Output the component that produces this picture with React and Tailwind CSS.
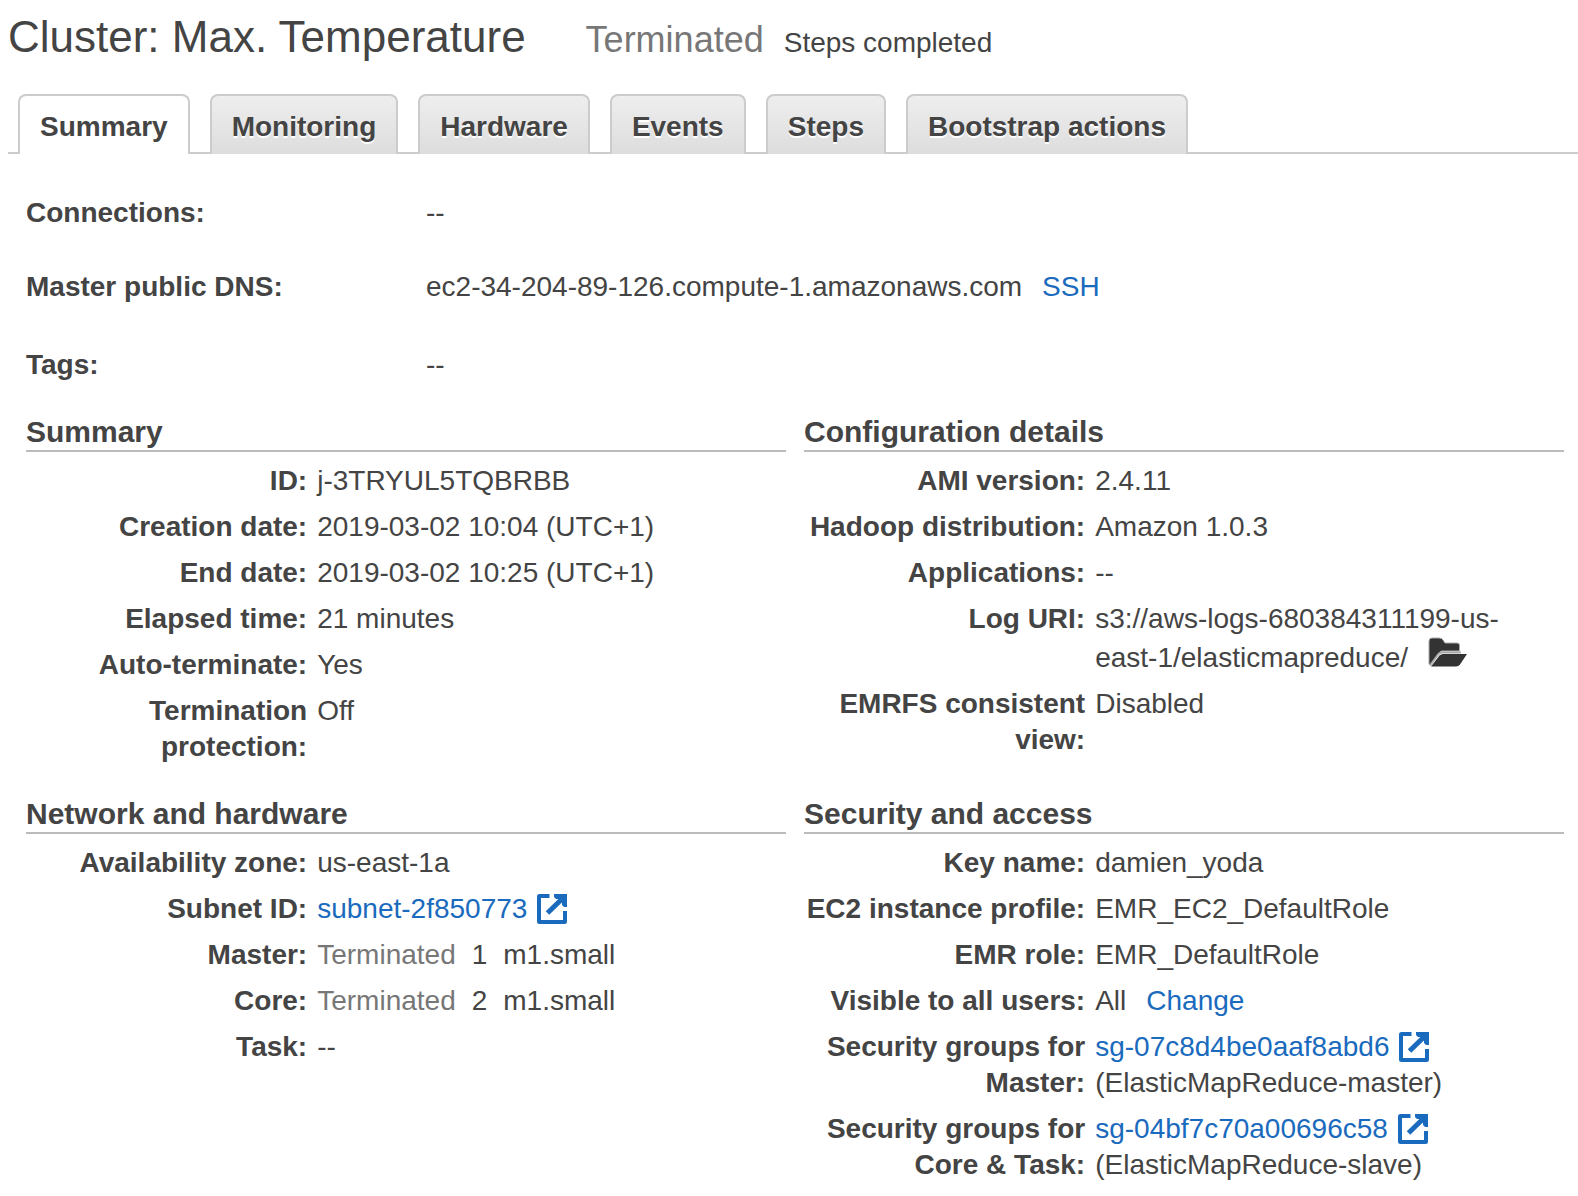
function ExternalIcon() {
  return (
    <svg className="ml-2.5 inline-block h-[30px] w-[30px] align-[-6px]" viewBox="0 0 30 30" fill="none" aria-hidden="true">
      <path d="M12.500 2H2.500a.5.5 0 0 0-.5.5V27.500a.5.5 0 0 0 .5.5H27.500a.5.5 0 0 0 .5-.5V17" stroke="#1a6abd" strokeWidth="4" />
      <path d="M17 0H30V13H27L25 11V9L21 5H19L17 3Z" fill="#1a6abd" />
      <path d="M27 3L10.500 19" stroke="#1a6abd" strokeWidth="5" />
    </svg>
  );
}

function FolderIcon() {
  return (
    <svg className="h-[30px] w-10" viewBox="0 0 40 30" aria-hidden="true">
      <path d="M1 27V4Q1 1 4 1H11Q14 1 15 3L17 6H29Q31.500 6 31.500 8V14H13L2 28Z" fill="#333" stroke="#aaa" strokeWidth="1" />
      <path d="M3 29.500L11.500 18.500Q13 17 15 17H39L32 27.500Q30.500 29.500 28 29.500Z" fill="#333" />
      <path d="M2 28.500L10 17.500Q11.500 15.500 13.500 15.500H33" fill="none" stroke="#aaa" strokeWidth="2" />
    </svg>
  );
}

function Link({ href, className = "", children }) {
  return <a href={href} className={`text-[#1a6abd] hover:underline ${className}`}>{children}</a>;
}

function Section({ title, rows }) {
  return (
    <section>
      <h2 className="border-b-2 border-[#bbb] text-[30px] leading-9 font-bold">{title}</h2>
      <dl className="mt-[11px] flex flex-col gap-2.5">
        {rows.map(([label, value]) => (
          <div key={label} className="grid grid-cols-[37%_1fr] leading-9">
            <dt className="text-right font-bold">{label}</dt>
            <dd className="min-w-0 pr-5 pl-2.5">{value}</dd>
          </div>
        ))}
      </dl>
    </section>
  );
}

function Instances({ count }) {
  return (
    <span className="flex gap-4">
      <span className="text-[#777]">Terminated</span>
      <span>{count}</span>
      <span>m1.small</span>
    </span>
  );
}

function Group({ id, name }) {
  return (
    <>
      <Link href="#group">{id}<ExternalIcon /></Link>
      <div>({name})</div>
    </>
  );
}

const tabs = ["Summary", "Monitoring", "Hardware", "Events", "Steps", "Bootstrap actions"];

export default function App() {
  return (
    <main className="bg-white pb-4 font-['Liberation_Sans',Arial,sans-serif] text-[28px] leading-9 text-[#444]">
      <header className="flex items-baseline pt-3 pl-2">
        <h1 className="text-[44px] leading-[50px]">Cluster: Max. Temperature</h1>
        <span className="ml-15 text-4xl text-[#777]">Terminated</span>
        <span className="ml-5">Steps completed</span>
      </header>

      <div role="tablist" className="mt-8 ml-2 flex gap-5 border-b-2 border-[#ccc] pl-2.5">
        {tabs.map((tab, i) => (
          <button
            key={tab}
            type="button"
            role="tab"
            aria-selected={i === 0}
            className={
              i === 0
                ? "-mb-0.5 h-15 rounded-t-lg border-2 border-b-0 border-[#ccc] bg-white px-5 pt-1 font-bold"
                : "-mb-0.5 h-15 rounded-t-lg border-2 border-b-0 border-[#ccc] bg-linear-to-b from-[#eee] to-[#ddd] px-5 pt-1 font-bold [text-shadow:0_2px_0_#fff]"
            }
          >
            {tab}
          </button>
        ))}
      </div>

      <dl className="mt-[41px] grid grid-cols-[400px_1fr] gap-y-[38px] pl-[26px]">
        <dt className="font-bold">Connections:</dt>
        <dd>--</dd>
        <dt className="font-bold">Master public DNS:</dt>
        <dd className="pb-1">
          ec2-34-204-89-126.compute-1.amazonaws.com
          <Link href="#ssh" className="ml-5">SSH</Link>
        </dd>
        <dt className="font-bold">Tags:</dt>
        <dd>--</dd>
      </dl>

      <div className="mt-[31px] grid grid-cols-2 gap-x-[18px] gap-y-[31px] pr-3.5 pl-[26px]">
        <Section
          title="Summary"
          rows={[
            ["ID:", "j-3TRYUL5TQBRBB"],
            ["Creation date:", "2019-03-02 10:04 (UTC+1)"],
            ["End date:", "2019-03-02 10:25 (UTC+1)"],
            ["Elapsed time:", "21 minutes"],
            ["Auto-terminate:", "Yes"],
            ["Termination protection:", "Off"],
          ]}
        />
        <Section
          title="Configuration details"
          rows={[
            ["AMI version:", "2.4.11"],
            ["Hadoop distribution:", "Amazon 1.0.3"],
            ["Applications:", "--"],
            [
              "Log URI:",
              <>
                s3://aws-logs-680384311199-us-east-1/elasticmapreduce/
                <button type="button" aria-label="Browse log folder" className="ml-5 inline-block h-[30px] align-[0px]">
                  <FolderIcon />
                </button>
              </>,
            ],
            ["EMRFS consistent view:", "Disabled"],
          ]}
        />
        <Section
          title="Network and hardware"
          rows={[
            ["Availability zone:", "us-east-1a"],
            ["Subnet ID:", <Link href="#subnet">subnet-2f850773<ExternalIcon /></Link>],
            ["Master:", <Instances count={1} />],
            ["Core:", <Instances count={2} />],
            ["Task:", "--"],
          ]}
        />
        <Section
          title="Security and access"
          rows={[
            ["Key name:", "damien_yoda"],
            ["EC2 instance profile:", "EMR_EC2_DefaultRole"],
            ["EMR role:", "EMR_DefaultRole"],
            ["Visible to all users:", <>All<Link href="#change" className="ml-5">Change</Link></>],
            ["Security groups for Master:", <Group id="sg-07c8d4be0aaf8abd6" name="ElasticMapReduce-master" />],
            ["Security groups for Core & Task:", <Group id="sg-04bf7c70a00696c58" name="ElasticMapReduce-slave" />],
          ]}
        />
      </div>
    </main>
  );
}
